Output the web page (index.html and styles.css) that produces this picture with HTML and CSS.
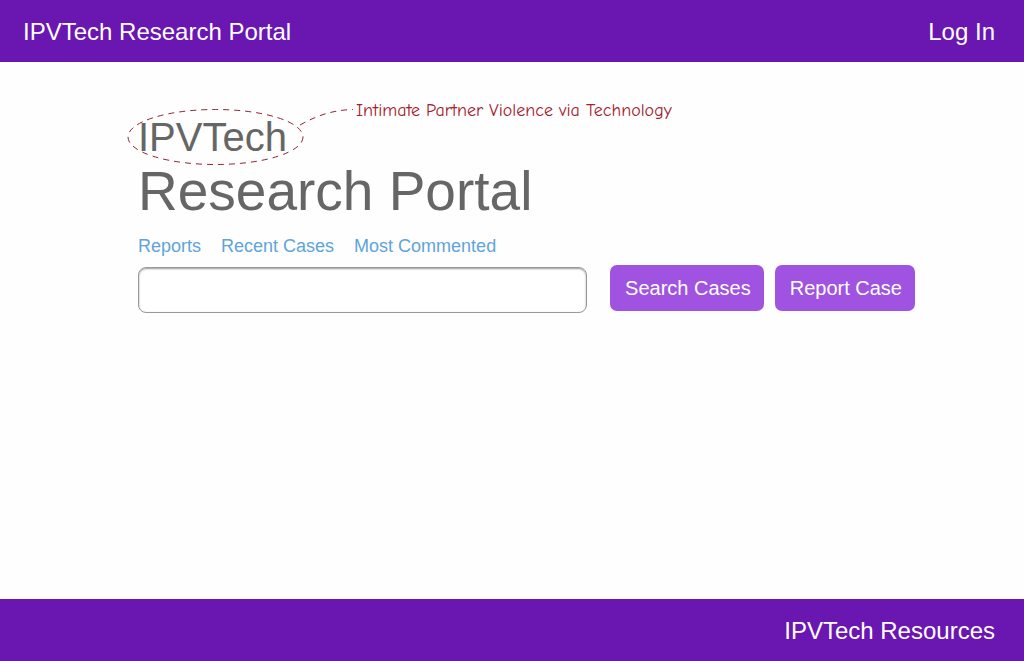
FILE: index.html
```html
<!DOCTYPE html>
<html lang="en">
<head>
<meta charset="utf-8">
<title>IPVTech Research Portal</title>
<link rel="stylesheet" href="styles.css">
</head>
<body>
<header class="bar">
  <a class="bar-link" href="#">IPVTech Research Portal</a>
  <a class="bar-link" href="#">Log In</a>
</header>
<main class="main">
  <h1 class="title">
    <span class="title-top">IPVTech
      <svg class="callout" width="230" height="66" viewBox="0 0 230 66" aria-hidden="true">
        <ellipse cx="90.500" cy="35" rx="87.500" ry="27.500"/>
        <path d="M175 23C191 14 207 8 228 7.500"/>
      </svg>
      <span class="note">Intimate Partner Violence via Technology</span>
    </span>
    <span class="title-main">Research Portal</span>
  </h1>
  <nav class="links">
    <a href="#">Reports</a>
    <a href="#">Recent Cases</a>
    <a href="#">Most Commented</a>
  </nav>
  <form class="search">
    <input class="field" type="text" aria-label="Search cases">
    <div class="actions">
      <button class="button" type="submit">Search Cases</button>
      <button class="button" type="button">Report Case</button>
    </div>
  </form>
</main>
<footer class="bar bar-end">
  <a class="bar-link" href="#">IPVTech Resources</a>
</footer>
</body>
</html>
```
FILE: styles.css
```css
* { box-sizing: border-box; }
body {
  margin: 0;
  min-height: 100vh;
  display: flex;
  flex-direction: column;
  background: #fefefe;
  font-family: "Liberation Sans", Arial, sans-serif;
}
.bar {
  display: flex;
  justify-content: space-between;
  padding: 17px 29px 15px 23px;
  background: #6a16b1;
}
.bar-end { justify-content: flex-end; }
.bar-link {
  color: #fff;
  font-size: 24px;
  line-height: 30px;
  text-decoration: none;
}
.main { flex: 1; padding: 52px 109px 40px 138px; }
.title { margin: 0; color: #666; font-weight: 400; }
.title-top {
  display: block;
  width: max-content;
  position: relative;
  font-size: 40px;
  line-height: 46px;
}
.callout {
  position: absolute;
  left: -13px;
  top: -12px;
  fill: none;
  stroke: #8f2433;
  stroke-width: 1;
  stroke-dasharray: 6 5;
}
.note {
  position: absolute;
  left: 218px;
  top: -15px;
  color: #a3202c;
  font-family: "Comic Neue", "Comic Sans MS", cursive;
  font-size: 18px;
  line-height: 24px;
  white-space: nowrap;
}
.title-main { display: block; font-size: 55px; line-height: 62px; }
.links {
  display: flex;
  gap: 20px;
  margin: 13px 0 8px;
  font-size: 18px;
  line-height: 22px;
}
.links a { color: #5fa4da; text-decoration: none; }
.search { display: flex; align-items: flex-start; gap: 23px; }
.field {
  flex: 1;
  min-width: 0;
  height: 46px;
  margin-top: 2px;
  padding: 0 12px;
  border: 1px solid #999;
  border-radius: 8px;
  background: #fff;
  box-shadow: inset 0 1px 2px #999;
  font: 20px "Liberation Sans", Arial, sans-serif;
}
.actions { display: flex; gap: 11px; }
.button {
  height: 46px;
  padding: 0 13px 0 15px;
  border: 0;
  border-radius: 7px;
  background: #a053e0;
  color: #fff;
  font: 20px "Liberation Sans", Arial, sans-serif;
}
```
